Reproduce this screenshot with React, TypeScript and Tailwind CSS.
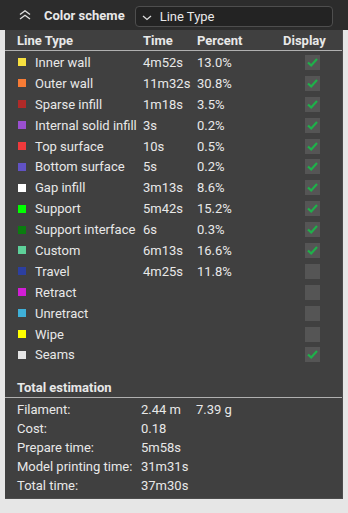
import React from "react";

type Row = { name: string; color: string; time: string; pct: string; on: boolean };

const rows: Row[] = [
  { name: "Inner wall", color: "#f7e040", time: "4m52s", pct: "13.0%", on: true },
  { name: "Outer wall", color: "#f77b35", time: "11m32s", pct: "30.8%", on: true },
  { name: "Sparse infill", color: "#b02a28", time: "1m18s", pct: "3.5%", on: true },
  { name: "Internal solid infill", color: "#9a4fd0", time: "3s", pct: "0.2%", on: true },
  { name: "Top surface", color: "#ef3a3c", time: "10s", pct: "0.5%", on: true },
  { name: "Bottom surface", color: "#6152c4", time: "5s", pct: "0.2%", on: true },
  { name: "Gap infill", color: "#ffffff", time: "3m13s", pct: "8.6%", on: true },
  { name: "Support", color: "#00ff00", time: "5m42s", pct: "15.2%", on: true },
  { name: "Support interface", color: "#0b7d10", time: "6s", pct: "0.3%", on: true },
  { name: "Custom", color: "#5ed19a", time: "6m13s", pct: "16.6%", on: true },
  { name: "Travel", color: "#2c3fa0", time: "4m25s", pct: "11.8%", on: false },
  { name: "Retract", color: "#d21ed6", time: "", pct: "", on: false },
  { name: "Unretract", color: "#3fb0d8", time: "", pct: "", on: false },
  { name: "Wipe", color: "#ffff00", time: "", pct: "", on: false },
  { name: "Seams", color: "#e5e5e5", time: "", pct: "", on: true },
];

const totals: [string, string, string?][] = [
  ["Filament:", "2.44 m", "7.39 g"],
  ["Cost:", "0.18"],
  ["Prepare time:", "5m58s"],
  ["Model printing time:", "31m31s"],
  ["Total time:", "37m30s"],
];

function Check({ on }: { on: boolean }) {
  return (
    <div className="w-[15px] h-[15px] bg-[#555555] flex items-center justify-center">
      {on && (
        <svg width="13" height="13" viewBox="0 0 13 13">
          <path d="M2 6.5 L5.2 9.5 L11 3" fill="none" stroke="#1fb14a" strokeWidth="2.2" strokeLinejoin="miter" />
        </svg>
      )}
    </div>
  );
}

export default function App() {
  return (
    <div
      className="w-[348px] h-[513px] bg-[#e6e6e6] text-[13px] text-[#e8e8e8] overflow-hidden"
      style={{ fontFamily: 'Roboto, "Liberation Sans", sans-serif' }}
    >
      <div className="h-[30px] bg-[#2c2c2c] flex items-center">
        <svg width="14" height="10" viewBox="0 0 14 10" className="ml-[18px]">
          <path d="M2 4.5 L7 0.8 L12 4.5 M2 9 L7 5.3 L12 9" fill="none" stroke="#e0e0e0" strokeWidth="1.4" />
        </svg>
        <span className="ml-[12px] font-bold leading-none">Color scheme</span>
        <div className="ml-[10px] w-[198px] h-[21px] mt-[3px] rounded-[4px] border border-[#4e4e4e] bg-[#232323] flex items-center">
          <svg width="10" height="6" viewBox="0 0 10 6" className="ml-[6px] mt-[2px]">
            <path d="M1 1 L5 4.5 L9 1" fill="none" stroke="#dddddd" strokeWidth="1.3" />
          </svg>
          <span className="ml-[8px] leading-none">Line Type</span>
        </div>
      </div>
      <div className="mx-[5px] h-[469px] bg-[#404040] border-r border-b border-[#4c4c4c]">
        <div className="h-[21px] flex items-center font-bold border-b border-[#b0b0b0] leading-none">
          <span className="ml-[12px] w-[126px]">Line Type</span>
          <span className="w-[54px]">Time</span>
          <span className="w-[86px]">Percent</span>
          <span>Display</span>
        </div>
        <div className="pt-[1px]">
          {rows.map((r) => (
            <div key={r.name} className="h-[20.9px] flex items-center leading-none">
              <div className="ml-[13px] w-[8px] h-[8px] shrink-0" style={{ backgroundColor: r.color }} />
              <span className="ml-[9px] w-[108px] shrink-0 whitespace-nowrap">{r.name}</span>
              <span className="w-[54px] shrink-0">{r.time}</span>
              <span className="w-[108px] shrink-0">{r.pct}</span>
              <Check on={r.on} />
            </div>
          ))}
        </div>
        <div className="mt-[12px] h-[21px] flex items-center font-bold leading-none border-b border-[#b0b0b0]">
          <span className="ml-[12px]">Total estimation</span>
        </div>
        <div className="pt-[2px]">
          {totals.map(([k, v, w]) => (
            <div key={k} className="h-[19px] flex items-center leading-none">
              <span className="ml-[12px] w-[124px] shrink-0 whitespace-nowrap">{k}</span>
              <span className="w-[55px] shrink-0">{v}</span>
              {w && <span>{w}</span>}
            </div>
          ))}
        </div>
      </div>
    </div>
  );
}
